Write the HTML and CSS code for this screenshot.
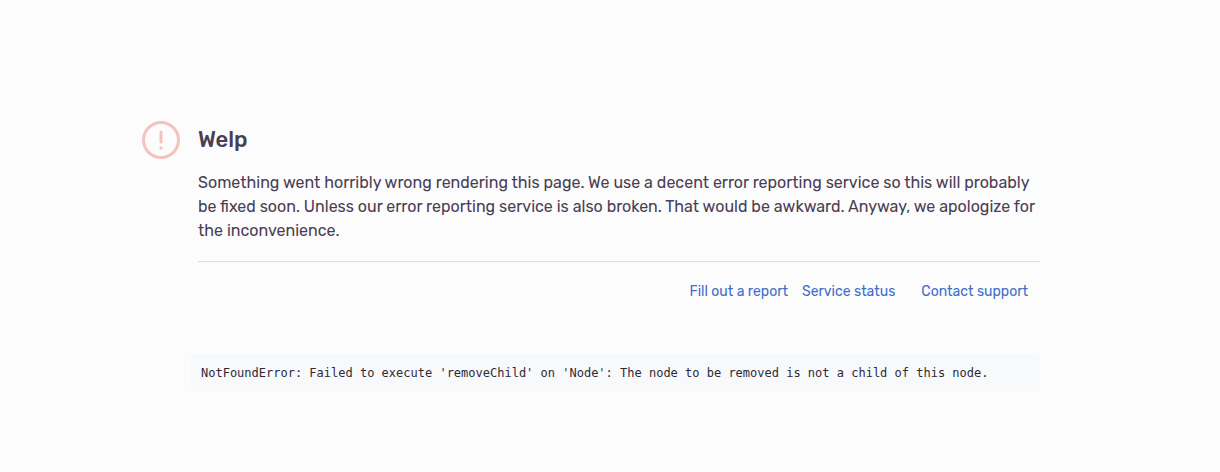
FILE: index.html
```html
<!DOCTYPE html>
<html lang="en">
<head>
  <meta charset="UTF-8">
  <meta name="viewport" content="width=device-width, initial-scale=1">
  <title>Welp</title>
  <link rel="stylesheet" href="styles.css">
</head>
<body>
  <main class="container">
    <svg class="icon" viewBox="0 0 38 38" aria-hidden="true">
      <circle cx="19" cy="19" r="17.5" fill="none" stroke="currentColor" stroke-width="3"/>
      <path d="M19 11v10" fill="none" stroke="currentColor" stroke-width="3" stroke-linecap="round"/>
      <circle cx="19" cy="27" r="1.7" fill="currentColor"/>
    </svg>
    <div class="content">
      <h1>Welp</h1>
      <p>Something went horribly wrong rendering this page. We use a decent error reporting service so this will probably be fixed soon. Unless our error reporting service is also broken. That would be awkward. Anyway, we apologize for the inconvenience.</p>
      <nav class="actions">
        <a class="report" href="#">Fill out a report</a>
        <a href="#">Service status</a>
        <a href="#">Contact support</a>
      </nav>
    </div>
    <pre class="error">NotFoundError: Failed to execute 'removeChild' on 'Node': The node to be removed is not a child of this node.</pre>
  </main>
</body>
</html>
```
FILE: styles.css
```css
body {
  margin: 0;
  background: #fcfcfc;
  color: #493e54;
  font-family: Rubik, Roboto, sans-serif;
  font-size: 16px;
  line-height: 24px;
}
.container {
  display: grid;
  grid-template-columns: 38px 1fr;
  column-gap: 18px;
  max-width: 898px;
  margin: 0 auto;
  padding: 121px 38px 80px 0;
}
.icon {
  width: 38px;
  height: 38px;
  color: #f5c3bf;
}
h1 {
  margin: 4px 0 16px;
  font-size: 22px;
  font-weight: 500;
  line-height: 30px;
}
p {
  margin: 0;
}
.actions {
  display: flex;
  justify-content: flex-end;
  gap: 26px;
  margin-top: 18px;
  padding: 18px 12px 0 0;
  border-top: 1px solid #e0dce5;
  font-size: 14px;
}
.actions a {
  color: #3d6dcc;
  text-decoration: none;
}
.actions .report {
  margin-right: -12px;
}
.error {
  grid-column: 2;
  margin: 50px 0 0 -7px;
  padding: 10px;
  border-radius: 3px;
  background: #f7f9fb;
  color: #2f2936;
  font-family: Consolas, "DejaVu Sans Mono", monospace;
  font-size: 12px;
  line-height: 18px;
  white-space: pre-wrap;
}
```
